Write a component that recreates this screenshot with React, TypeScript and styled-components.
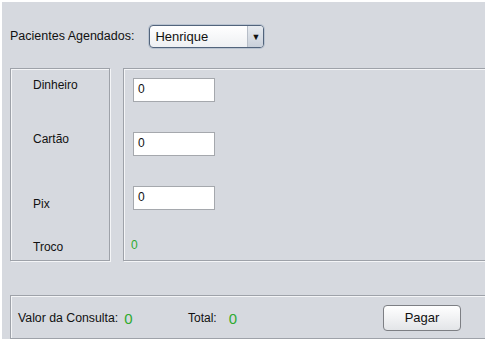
import React from 'react';
import styled, { createGlobalStyle } from 'styled-components';

const GlobalStyle = createGlobalStyle`
  html, body {
    margin: 0;
    padding: 0;
    background: #ffffff;
    overflow: hidden;
  }
  body {
    font-family: "Liberation Sans", Arial, sans-serif;
    font-size: 12px;
    color: #111;
  }
`;

const Window = styled.div`
  margin: 2px 0 0 2px;
  height: 337px;
  background: #d6d9df;
  overflow: hidden;
  display: flex;
  flex-direction: column;
  padding-left: 8px;
`;

const TopBar = styled.div`
  height: 46px;
  display: flex;
  align-items: center;
  gap: 15px;
  margin-top: 12px;
`;

const Label = styled.span<{ $size?: number }>`
  font-size: ${p => p.$size ?? 12}px;
  line-height: 15px;
  color: #111;
  white-space: nowrap;
`;

const Combo = styled.div`
  width: 113px;
  height: 21px;
  border: 1px solid #52647c;
  border-radius: 4px;
  background: linear-gradient(#ffffff, #eef0f3);
  display: flex;
  align-items: stretch;
  box-shadow: 0 0 0 1px #b9c3d0;
`;

const ComboText = styled.span`
  flex: 1;
  padding-left: 5px;
  font-size: 13px;
  line-height: 21px;
`;

const ComboArrow = styled.span`
  width: 15px;
  border-left: 1px solid #b7bec8;
  background: linear-gradient(#e7ebf0, #c9d0da);
  border-radius: 0 3px 3px 0;
  display: flex;
  align-items: center;
  justify-content: center;
  font-size: 9px;
  color: #111;
`;

const Panels = styled.div`
  display: flex;
  gap: 13px;
  height: 194px;
  margin-top: 8px;
`;

const Etched = styled.div`
  border: 1px solid #9ea2a9;
  box-shadow: inset 1px 1px 0 #f4f5f7, 1px 1px 0 #f4f5f7;
  box-sizing: border-box;
`;

const LabelPanel = styled(Etched)`
  width: 100px;
  padding-left: 22px;
  display: flex;
  flex-direction: column;
`;

const FieldPanel = styled(Etched)`
  flex: 1;
  margin-right: -20px;
  padding-left: 9px;
  display: flex;
  flex-direction: column;
`;

const Row = styled.div<{ $top: number; $shift?: number }>`
  margin-top: ${p => p.$top}px;
  margin-left: ${p => p.$shift ?? 0}px;
`;

const Field = styled.div`
  width: 76px;
  height: 22px;
  border: 1px solid #a5a8ad;
  background: #fff;
  padding-left: 4px;
  box-sizing: content-box;
  font-size: 12px;
  line-height: 20px;
`;

const Green = styled.span<{ $size?: number }>`
  color: #2faa2f;
  font-size: ${p => p.$size ?? 12}px;
  line-height: 15px;
`;

const Footer = styled(Etched)`
  margin-top: 34px;
  margin-right: -20px;
  height: 44px;
  display: flex;
  align-items: center;
  padding: 2px 0 0 7px;
`;

const FooterItem = styled.div<{ $width: number; $gap: number }>`
  width: ${p => p.$width}px;
  display: flex;
  align-items: center;
  gap: ${p => p.$gap}px;
  flex-shrink: 0;
`;

const Button = styled.button`
  width: 78px;
  height: 26px;
  margin-top: -1px;
  border: 1px solid #7d7f84;
  border-radius: 4px;
  background: linear-gradient(#ffffff, #e3e5e8);
  font-family: "Liberation Sans", Arial, sans-serif;
  font-size: 13px;
  color: #111;
  padding: 0;
`;

export default function App() {
  return (
    <>
      <GlobalStyle />
      <Window>
        <TopBar>
          <Label $size={12.5}>Pacientes Agendados:</Label>
          <Combo>
            <ComboText>Henrique</ComboText>
            <ComboArrow>▼</ComboArrow>
          </Combo>
        </TopBar>
        <Panels>
          <LabelPanel>
            <Row $top={9}><Label>Dinheiro</Label></Row>
            <Row $top={39}><Label>Cartão</Label></Row>
            <Row $top={50}><Label>Pix</Label></Row>
            <Row $top={28}><Label>Troco</Label></Row>
          </LabelPanel>
          <FieldPanel>
            <Row $top={9}><Field>0</Field></Row>
            <Row $top={30}><Field>0</Field></Row>
            <Row $top={30}><Field>0</Field></Row>
            <Row $top={28} $shift={-2}><Green>0</Green></Row>
          </FieldPanel>
        </Panels>
        <Footer>
          <FooterItem $width={170} $gap={6}>
            <Label $size={12.3}>Valor da Consulta:</Label>
            <Green $size={15}>0</Green>
          </FooterItem>
          <FooterItem $width={195} $gap={12}>
            <Label>Total:</Label>
            <Green $size={15}>0</Green>
          </FooterItem>
          <Button>Pagar</Button>
        </Footer>
      </Window>
    </>
  );
}
